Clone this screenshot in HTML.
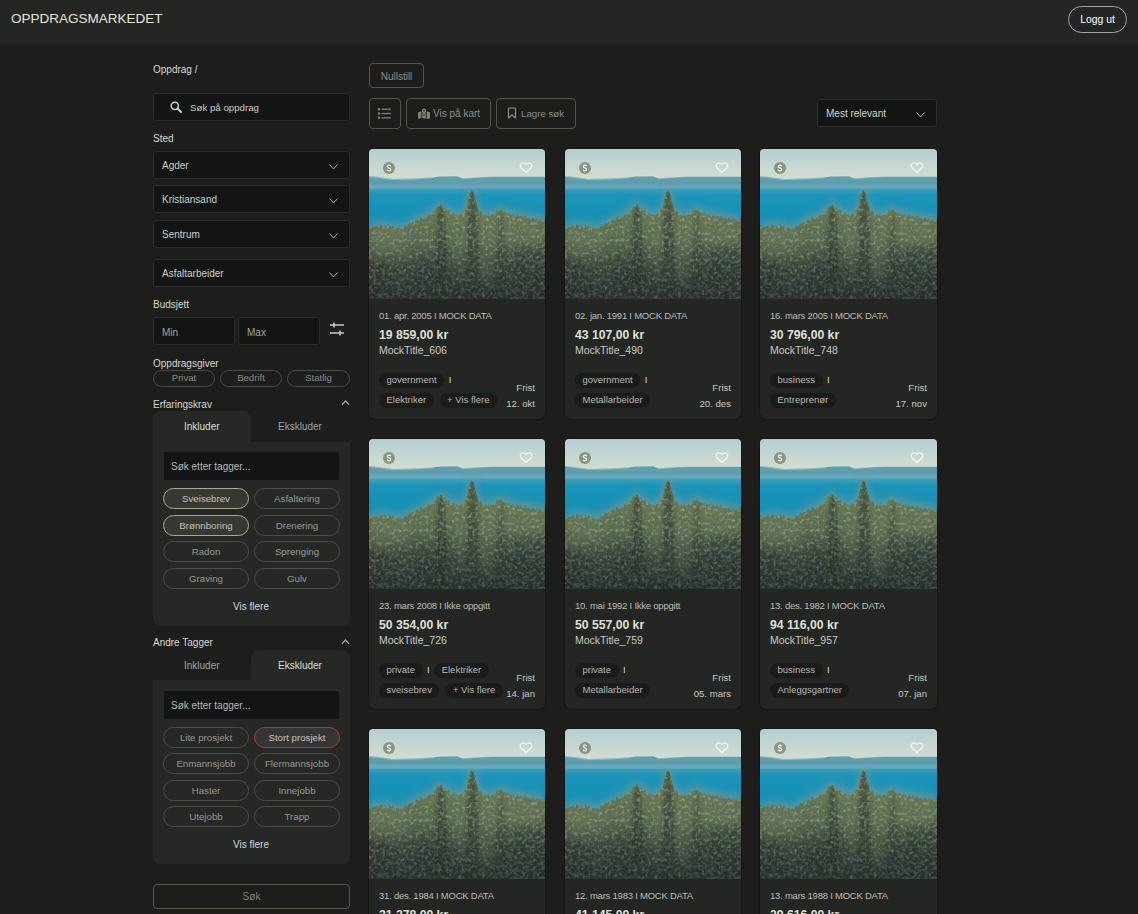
<!DOCTYPE html>
<html><head><meta charset="utf-8">
<style>
*{box-sizing:border-box;margin:0;padding:0}
html,body{width:1138px;height:914px;overflow:hidden;background:#1d1d1b;font-family:"Liberation Sans",sans-serif;color:#d4d8cc}
.a{position:absolute}
.hdr{left:0;top:0;width:1138px;height:44px;background:#242623}
.logo{left:11px;top:11px;font-size:13.5px;color:#e4e6d6;white-space:nowrap}
.logout{left:1068px;top:6px;width:59px;height:27px;border:1px solid #a3a49c;border-radius:14px;color:#fff;font-size:10.4px;text-align:center;line-height:25px}
.lbl{font-size:10px;color:#d6dace;white-space:nowrap;line-height:12px}
.inp{background:#131514;border:1px solid #2b2c2a;border-radius:3px}
.sel{left:153px;width:197px;height:28px}
.sel span{position:absolute;left:8px;top:8px;font-size:10px;color:#c9cdc5;line-height:12px}
.chev{position:absolute;right:11px;top:12px;width:9px;height:6px}
.pill{border:1px solid #4a4b46;border-radius:9px;color:#878984;font-size:9.6px;text-align:center;line-height:14px;height:17px}
.panel{left:153px;width:197px}
.pbody{position:absolute;left:0;top:31px;width:197px;bottom:0;background:#262826;border-radius:0 0 8px 8px}
.tact{position:absolute;top:0;height:31px;background:#262826;border-radius:8px 8px 0 0}
.tabout{position:absolute;top:0;height:31px;width:99px;background:#1e1e1d}
.tabtxt{position:absolute;top:10px;font-size:10px;line-height:12px;white-space:nowrap}
.tin{position:absolute;left:11px;top:41px;width:175px;height:28px;background:#131514;border-radius:2px}
.tin span{position:absolute;left:7px;top:9px;font-size:10px;color:#b4b8b0;line-height:12px}
.tag{position:absolute;width:86px;height:21px;border:1px solid #4c4d46;border-radius:11px;color:#979994;font-size:9.7px;text-align:center;line-height:19px;white-space:nowrap}
.tag.on{border-color:#a9aa8a;background:#363831;color:#c2c4bc}
.tag.red{border-color:#b0392d;background:#353535;color:#c4c6c0}
.visf{position:absolute;font-size:10px;color:#cdd6d8;line-height:12px;white-space:nowrap}
.btn{border:1px solid #54564b;border-radius:4px;color:#8a8e8a;font-size:10px;white-space:nowrap}
.card{width:176px;height:270px;background:#242624;box-shadow:0 0 1px 0.5px #191918;border-radius:4px 4px 7px 7px;overflow:hidden}
.card svg.pic{position:absolute;left:0;top:0;width:100%;height:150px}
.date{position:absolute;left:10px;top:161px;font-size:9.5px;color:#b9bdb5;line-height:12px;white-space:nowrap;letter-spacing:-0.23px}
.price{position:absolute;left:10px;top:179px;font-size:12.2px;font-weight:bold;color:#dfe1d7;line-height:15px;white-space:nowrap}
.title{position:absolute;left:10px;top:195px;font-size:10.5px;color:#c6cac0;line-height:12px;white-space:nowrap}
.trow{position:absolute;left:10px;display:flex;gap:6px;white-space:nowrap}
.ct{display:block;height:15px;border-radius:8px;background:#1a1b1a;color:#b4b8b0;font-size:9.5px;line-height:14px;padding:0 7.5px;white-space:nowrap}
.dv{display:block;font-size:9.5px;line-height:13px;height:15px;color:#d8d8d0;margin:0 -1.5px}
.bar{position:absolute;width:1px;height:7px;background:#d8d8d0}
.frist{position:absolute;right:10px;font-size:9.6px;color:#c4c8c0;line-height:12px;white-space:nowrap;text-align:right}
</style></head><body>
<svg width="0" height="0" style="position:absolute">
<defs>
<linearGradient id="sky" gradientUnits="userSpaceOnUse" x1="0" y1="0" x2="0" y2="30"><stop offset="0" stop-color="#b3cfd0"/><stop offset="0.65" stop-color="#c8d8d2"/><stop offset="1" stop-color="#d4ddcf"/></linearGradient>
<linearGradient id="mtn" x1="0" y1="0" x2="0" y2="1"><stop offset="0" stop-color="#64a0ae"/><stop offset="0.5" stop-color="#5b9dae"/><stop offset="0.8" stop-color="#6aaabc"/><stop offset="1" stop-color="#3d9dbd"/></linearGradient>
<linearGradient id="sea" x1="0" y1="0" x2="0" y2="1"><stop offset="0" stop-color="#3aa0bd"/><stop offset="0.06" stop-color="#1a94b8"/><stop offset="0.4" stop-color="#108eb4"/><stop offset="1" stop-color="#0d8ab0"/></linearGradient>
<linearGradient id="tr" x1="0" y1="0" x2="0" y2="1"><stop offset="0.4" stop-color="#6b7d50"/><stop offset="0.62" stop-color="#58694a"/><stop offset="0.8" stop-color="#3e4a3d"/><stop offset="1" stop-color="#313937"/></linearGradient>
<linearGradient id="shade" gradientUnits="userSpaceOnUse" x1="0" y1="90" x2="0" y2="150"><stop offset="0" stop-color="#1c2420" stop-opacity="0"/><stop offset="1" stop-color="#1c2420" stop-opacity="0.45"/></linearGradient>
<filter id="blr" x="-10%" y="-10%" width="120%" height="120%"><feGaussianBlur stdDeviation="1.5"/></filter>
<filter id="blr2" x="-20%" y="-20%" width="140%" height="140%"><feGaussianBlur stdDeviation="4"/></filter>
<filter id="nz" x="0" y="0" width="100%" height="100%"><feTurbulence type="fractalNoise" baseFrequency="0.3" numOctaves="2" seed="5"/><feColorMatrix type="matrix" values="0 0 0 0 0.62  0 0 0 0 0.7  0 0 0 0 0.46  3 0 0 0 -1.5"/></filter>
<filter id="nzd" x="0" y="0" width="100%" height="100%"><feTurbulence type="fractalNoise" baseFrequency="0.25" numOctaves="2" seed="11"/><feColorMatrix type="matrix" values="0 0 0 0 0.12  0 0 0 0 0.15  0 0 0 0 0.15  3 0 0 0 -1.3"/></filter>
<clipPath id="tclip"><path d="M0.0 76.4 L2.0 78.8 L4.0 77.5 L6.0 78.3 L8.0 76.0 L10.0 78.3 L12.0 74.8 L14.0 77.8 L16.0 76.1 L18.0 79.1 L20.0 75.3 L22.0 78.7 L24.0 76.1 L26.0 80.7 L28.0 78.7 L30.0 79.6 L32.0 79.1 L34.0 80.3 L36.0 76.6 L38.0 77.8 L40.0 73.5 L42.0 74.7 L44.0 73.0 L46.0 73.1 L48.0 70.1 L50.0 71.6 L52.0 67.6 L54.0 70.2 L56.0 66.7 L58.0 68.7 L60.0 64.4 L62.0 65.7 L64.0 61.5 L66.0 62.2 L68.0 57.4 L70.0 57.2 L72.0 55.0 L74.0 59.0 L76.0 58.5 L78.0 62.3 L80.0 60.9 L82.0 65.1 L84.0 63.4 L86.0 65.7 L88.0 65.8 L90.0 67.5 L92.0 64.5 L94.0 63.5 L96.0 60.9 L98.0 57.6 L100.0 48.0 L102.0 41.7 L104.0 40.7 L106.0 49.7 L108.0 55.9 L110.0 63.5 L112.0 61.2 L114.0 66.1 L116.0 65.3 L118.0 67.2 L120.0 63.8 L122.0 66.3 L124.0 65.4 L126.0 66.4 L128.0 60.8 L130.0 61.9 L132.0 58.9 L134.0 62.4 L136.0 63.4 L138.0 64.5 L140.0 63.9 L142.0 66.4 L144.0 64.0 L146.0 68.3 L148.0 64.7 L150.0 68.7 L152.0 65.2 L154.0 68.7 L156.0 66.1 L158.0 68.9 L160.0 68.9 L162.0 70.8 L164.0 67.4 L166.0 71.5 L168.0 67.6 L170.0 70.7 L172.0 70.1 L174.0 71.9 L176.0 68.3 L176 150 L0 150Z"/></clipPath>
<symbol id="pic" viewBox="0 0 176 150">
<rect width="176" height="150" fill="url(#sky)"/>
<path d="M0 27 L10 28 L23 30 L45 29.5 L62 28.6 L70 27.4 L88 27.2 L94 29.2 L108 28.3 L124 27.5 L176 27.5 L176 41 L0 41Z" fill="url(#mtn)"/>
<path d="M0 27.5 L10 28.5 L23 30.6 L45 30 L62 29 L70 26.8 L88 26.7 L94 29.8 L108 28.3 L124 27.5 L176 27.5" fill="none" stroke="#d8e6e2" stroke-width="0.8" opacity="0.5"/>
<rect y="40" width="176" height="110" fill="url(#sea)"/>
<g transform="translate(0,-4)"><path filter="url(#blr2)" d="M0.0 76.4 L2.0 78.8 L4.0 77.5 L6.0 78.3 L8.0 76.0 L10.0 78.3 L12.0 74.8 L14.0 77.8 L16.0 76.1 L18.0 79.1 L20.0 75.3 L22.0 78.7 L24.0 76.1 L26.0 80.7 L28.0 78.7 L30.0 79.6 L32.0 79.1 L34.0 80.3 L36.0 76.6 L38.0 77.8 L40.0 73.5 L42.0 74.7 L44.0 73.0 L46.0 73.1 L48.0 70.1 L50.0 71.6 L52.0 67.6 L54.0 70.2 L56.0 66.7 L58.0 68.7 L60.0 64.4 L62.0 65.7 L64.0 61.5 L66.0 62.2 L68.0 57.4 L70.0 57.2 L72.0 55.0 L74.0 59.0 L76.0 58.5 L78.0 62.3 L80.0 60.9 L82.0 65.1 L84.0 63.4 L86.0 65.7 L88.0 65.8 L90.0 67.5 L92.0 64.5 L94.0 63.5 L96.0 60.9 L98.0 57.6 L100.0 48.0 L102.0 41.7 L104.0 40.7 L106.0 49.7 L108.0 55.9 L110.0 63.5 L112.0 61.2 L114.0 66.1 L116.0 65.3 L118.0 67.2 L120.0 63.8 L122.0 66.3 L124.0 65.4 L126.0 66.4 L128.0 60.8 L130.0 61.9 L132.0 58.9 L134.0 62.4 L136.0 63.4 L138.0 64.5 L140.0 63.9 L142.0 66.4 L144.0 64.0 L146.0 68.3 L148.0 64.7 L150.0 68.7 L152.0 65.2 L154.0 68.7 L156.0 66.1 L158.0 68.9 L160.0 68.9 L162.0 70.8 L164.0 67.4 L166.0 71.5 L168.0 67.6 L170.0 70.7 L172.0 70.1 L174.0 71.9 L176.0 68.3 L176 150 L0 150Z" fill="#869a92" opacity="0.7"/></g>
<g clip-path="url(#tclip)">
<rect width="176" height="150" fill="url(#tr)"/>
<g filter="url(#blr2)">
<path d="M-5 112 L18 108 L22 155 L-5 155Z" fill="#2a322e" opacity="0.5"/>
<path d="M142 100 L180 95 L180 155 L138 155Z" fill="#28302d" opacity="0.45"/>
<path d="M48 115 L60 105 L66 155 L44 155Z" fill="#2d3331" opacity="0.5"/>
<path d="M86 86 L112 80 L128 92 L124 134 L96 138 L86 110Z" fill="#728458" opacity="0.35"/>
<path d="M2 78 L37 74 L38 108 L4 110Z" fill="#718259" opacity="0.4"/>
<path d="M118 70 L170 74 L172 95 L125 94Z" fill="#6c7b56" opacity="0.35"/>
</g>
<g filter="url(#blr)">
<path d="M72 50 L76 70 L81 150 L63 150 L68 70Z" fill="#26302a" opacity="0.6"/>
<path d="M103.5 32 L108 60 L113 150 L94 150 L99 60Z" fill="#26302a" opacity="0.55"/><path d="M132 60 L136 80 L139 150 L125 150 L128 80Z" fill="#26302a" opacity="0.35"/>
</g>
<rect width="176" height="150" filter="url(#nzd)" opacity="0.75"/>
<rect width="176" height="150" filter="url(#nz)" opacity="0.42"/>
<rect width="176" height="150" fill="url(#shade)"/>
</g>
</symbol>
</defs>
</svg>

<div class="a hdr"></div>
<div class="a logo">OPPDRAGSMARKEDET</div>
<div class="a logout">Logg ut</div>

<!-- SIDEBAR -->
<div class="a lbl" style="left:153px;top:64px">Oppdrag /</div>
<div class="a inp" style="left:153px;top:93px;width:197px;height:28px">
  <svg class="a" style="left:16px;top:7px" width="12" height="12" viewBox="0 0 12 12"><circle cx="4.8" cy="4.8" r="3.6" fill="none" stroke="#d0d4cc" stroke-width="1.5"/><path d="M7.5 7.5 L11 11" stroke="#d0d4cc" stroke-width="1.8" stroke-linecap="round"/></svg>
  <span class="a" style="left:36px;top:8px;font-size:9.7px;color:#c9cdc5;line-height:12px">Søk på oppdrag</span>
</div>
<div class="a lbl" style="left:153px;top:133px">Sted</div>
<div class="a inp sel" style="top:151px"><span>Agder</span><svg class="chev" viewBox="0 0 9 6"><path d="M0.5 0.5 L4.5 5 L8.5 0.5" fill="none" stroke="#a8aaa4" stroke-width="1"/></svg></div>
<div class="a inp sel" style="top:185px"><span>Kristiansand</span><svg class="chev" viewBox="0 0 9 6"><path d="M0.5 0.5 L4.5 5 L8.5 0.5" fill="none" stroke="#a8aaa4" stroke-width="1"/></svg></div>
<div class="a inp sel" style="top:220px"><span>Sentrum</span><svg class="chev" viewBox="0 0 9 6"><path d="M0.5 0.5 L4.5 5 L8.5 0.5" fill="none" stroke="#a8aaa4" stroke-width="1"/></svg></div>
<div class="a inp sel" style="top:259px"><span>Asfaltarbeider</span><svg class="chev" viewBox="0 0 9 6"><path d="M0.5 0.5 L4.5 5 L8.5 0.5" fill="none" stroke="#a8aaa4" stroke-width="1"/></svg></div>
<div class="a lbl" style="left:153px;top:299px">Budsjett</div>
<div class="a inp" style="left:153px;top:317px;width:82px;height:28px"><span class="a" style="left:8px;top:9px;font-size:10px;color:#a0a49e;line-height:12px">Min</span></div>
<div class="a inp" style="left:238px;top:317px;width:82px;height:28px"><span class="a" style="left:8px;top:9px;font-size:10px;color:#a0a49e;line-height:12px">Max</span></div>
<svg class="a" style="left:330px;top:322px" width="15" height="14" viewBox="0 0 15 14"><path d="M0 3 H14 M0 11 H14" stroke="#c8ccc4" stroke-width="1.6"/><path d="M4 0.5 V5.5 M10 8.5 V13.5" stroke="#c8ccc4" stroke-width="1.6"/></svg>
<div class="a lbl" style="left:153px;top:358px">Oppdragsgiver</div>
<div class="a pill" style="left:153px;top:370px;width:62px">Privat</div>
<div class="a pill" style="left:220px;top:370px;width:62px">Bedrift</div>
<div class="a pill" style="left:287px;top:370px;width:63px">Statlig</div>

<div class="a lbl" style="left:153px;top:399px">Erfaringskrav</div>
<svg class="a" style="left:341px;top:399px" width="9" height="7" viewBox="0 0 9 7"><path d="M1 5.8 L4.5 2 L8 5.8" fill="none" stroke="#a8aaa4" stroke-width="1.2"/></svg>
<div class="a panel" style="top:411px;height:215px">
  <div class="pbody"></div><div class="tact" style="left:0;width:98px"></div>
  <div class="tabtxt" style="left:31px;color:#dadfd2">Inkluder</div>
  <div class="tabtxt" style="left:125px;color:#9aa3a4">Ekskluder</div>
  <div class="tin"><span>Søk etter tagger...</span></div>
  <div class="tag on" style="left:10px;top:77px">Sveisebrev</div>
  <div class="tag" style="left:101px;top:77px">Asfaltering</div>
  <div class="tag on" style="left:10px;top:104px">Brønnboring</div>
  <div class="tag" style="left:101px;top:104px">Drenering</div>
  <div class="tag" style="left:10px;top:130px">Radon</div>
  <div class="tag" style="left:101px;top:130px">Sprenging</div>
  <div class="tag" style="left:10px;top:157px">Graving</div>
  <div class="tag" style="left:101px;top:157px">Gulv</div>
  <div class="visf" style="left:80px;top:190px">Vis flere</div>
</div>

<div class="a lbl" style="left:153px;top:637px">Andre Tagger</div>
<svg class="a" style="left:341px;top:638px" width="9" height="7" viewBox="0 0 9 7"><path d="M1 5.8 L4.5 2 L8 5.8" fill="none" stroke="#a8aaa4" stroke-width="1.2"/></svg>
<div class="a panel" style="top:650px;height:214px">
  <div class="pbody" style="top:30px"></div><div class="tact" style="left:98px;width:99px;height:30px"></div>
  <div class="tabtxt" style="left:31px;top:10px;color:#9aa3a4">Inkluder</div>
  <div class="tabtxt" style="left:125px;top:10px;color:#dadfd2">Ekskluder</div>
  <div class="tin"><span>Søk etter tagger...</span></div>
  <div class="tag" style="left:10px;top:77px">Lite prosjekt</div>
  <div class="tag red" style="left:101px;top:77px">Stort prosjekt</div>
  <div class="tag" style="left:10px;top:103px">Enmannsjobb</div>
  <div class="tag" style="left:101px;top:103px">Flermannsjobb</div>
  <div class="tag" style="left:10px;top:130px">Haster</div>
  <div class="tag" style="left:101px;top:130px">Innejobb</div>
  <div class="tag" style="left:10px;top:156px">Utejobb</div>
  <div class="tag" style="left:101px;top:156px">Trapp</div>
  <div class="visf" style="left:80px;top:189px">Vis flere</div>
</div>
<div class="a btn" style="left:153px;top:884px;width:197px;height:25px;text-align:center;line-height:23px;color:#7c807c">Søk</div>

<!-- MAIN TOOLBAR -->
<div class="a btn" style="left:369px;top:63px;width:55px;height:25px;text-align:center;line-height:25px">Nullstill</div>
<div class="a btn" style="left:369px;top:98px;width:32px;height:31px"></div>
<svg class="a" style="left:377px;top:107px" width="15" height="13" viewBox="0 0 15 13"><g fill="#80846f"><circle cx="2" cy="2.2" r="1.2"/><circle cx="2" cy="6.5" r="1.2"/><circle cx="2" cy="10.8" r="1.2"/><rect x="4.6" y="1.6" width="9.2" height="1.3"/><rect x="4.6" y="5.9" width="9.2" height="1.3"/><rect x="4.6" y="10.2" width="9.2" height="1.3"/></g></svg>
<div class="a btn" style="left:406px;top:98px;width:85px;height:31px"></div>
<svg class="a" style="left:418px;top:108px" width="12" height="11" viewBox="0 0 12 11"><path d="M0 4.3 L3.3 3.4 L3.3 10 L0 11Z M4.2 3.6 L5.6 7.6 L6 8.2 L6.4 7.6 L7.8 3.6 L7.8 10.8 L4.2 10Z M8.7 3.4 L12 4.3 L12 10.2 L8.7 11Z" fill="#80846f"/><path d="M6 7.6 L4.1 3.6 A2.1 2.1 0 1 1 7.9 3.6Z" fill="#80846f"/><circle cx="6" cy="2.6" r="0.8" fill="#1d1d1b"/></svg>
<div class="a" style="left:433px;top:108px;font-size:10px;line-height:12px;color:#8a8e8a;white-space:nowrap">Vis på kart</div>
<div class="a btn" style="left:496px;top:98px;width:80px;height:31px"></div>
<svg class="a" style="left:507px;top:107px" width="10" height="12" viewBox="0 0 10 12"><path d="M1.5 1 H8.5 V11 L5 8 L1.5 11Z" fill="none" stroke="#8a8e8a" stroke-width="1.2" stroke-linejoin="round"/></svg>
<div class="a" style="left:521px;top:108px;font-size:9.7px;line-height:12px;color:#8a8e8a;white-space:nowrap">Lagre søk</div>
<div class="a inp" style="left:817px;top:99px;width:120px;height:28px"><span class="a" style="left:8px;top:8px;font-size:10px;color:#d0d4cc;line-height:12px">Mest relevant</span><svg class="chev" viewBox="0 0 9 6"><path d="M0.5 0.5 L4.5 5 L8.5 0.5" fill="none" stroke="#a8aaa4" stroke-width="1"/></svg></div>

<div class="a card" style="left:369px;top:149px">
<svg class="pic" viewBox="0 0 176 150" preserveAspectRatio="none"><use href="#pic"/></svg>
<svg class="a" style="left:14px;top:13px" width="12" height="12" viewBox="0 0 12 12"><circle cx="6" cy="6" r="6" fill="#8a957f"/><path d="M7.7 4.2 C7.4 3.5 6.8 3.1 6 3.1 C5.1 3.1 4.4 3.6 4.4 4.4 C4.4 6.1 7.7 5.6 7.7 7.5 C7.7 8.4 7 8.9 6 8.9 C5.1 8.9 4.5 8.4 4.2 7.7" fill="none" stroke="#f4f6f0" stroke-width="1.25"/></svg>
<svg class="a" style="left:150px;top:13px" width="14" height="12" viewBox="0 0 14 12"><path d="M7 10.6 L2.2 5.9 C0.9 4.6 0.9 2.5 2.3 1.5 C3.8 0.5 5.7 1 7 2.6 C8.3 1 10.2 0.5 11.7 1.5 C13.1 2.5 13.1 4.6 11.8 5.9 Z" fill="none" stroke="#f2f4f0" stroke-width="1.4" stroke-linejoin="round"/></svg>
<div class="date">01. apr. 2005 I MOCK DATA</div>
<div class="price">19 859,00 kr</div>
<div class="title">MockTitle_606</div>
<div class="trow" style="top:224px">
<span class="ct">government</span>
<span class="dv">I</span>
</div>
<div class="trow" style="top:244px">
<span class="ct">Elektriker</span>
<span class="ct">+ Vis flere</span>
</div>
<div class="frist" style="top:233px">Frist</div>
<div class="frist" style="top:249px">12. okt</div>
</div>
<div class="a card" style="left:565px;top:149px">
<svg class="pic" viewBox="0 0 176 150" preserveAspectRatio="none"><use href="#pic"/></svg>
<svg class="a" style="left:14px;top:13px" width="12" height="12" viewBox="0 0 12 12"><circle cx="6" cy="6" r="6" fill="#8a957f"/><path d="M7.7 4.2 C7.4 3.5 6.8 3.1 6 3.1 C5.1 3.1 4.4 3.6 4.4 4.4 C4.4 6.1 7.7 5.6 7.7 7.5 C7.7 8.4 7 8.9 6 8.9 C5.1 8.9 4.5 8.4 4.2 7.7" fill="none" stroke="#f4f6f0" stroke-width="1.25"/></svg>
<svg class="a" style="left:150px;top:13px" width="14" height="12" viewBox="0 0 14 12"><path d="M7 10.6 L2.2 5.9 C0.9 4.6 0.9 2.5 2.3 1.5 C3.8 0.5 5.7 1 7 2.6 C8.3 1 10.2 0.5 11.7 1.5 C13.1 2.5 13.1 4.6 11.8 5.9 Z" fill="none" stroke="#f2f4f0" stroke-width="1.4" stroke-linejoin="round"/></svg>
<div class="date">02. jan. 1991 I MOCK DATA</div>
<div class="price">43 107,00 kr</div>
<div class="title">MockTitle_490</div>
<div class="trow" style="top:224px">
<span class="ct">government</span>
<span class="dv">I</span>
</div>
<div class="trow" style="top:244px">
<span class="ct">Metallarbeider</span>
</div>
<div class="frist" style="top:233px">Frist</div>
<div class="frist" style="top:249px">20. des</div>
</div>
<div class="a card" style="left:760px;top:149px;width:177px">
<svg class="pic" viewBox="0 0 176 150" preserveAspectRatio="none"><use href="#pic"/></svg>
<svg class="a" style="left:14px;top:13px" width="12" height="12" viewBox="0 0 12 12"><circle cx="6" cy="6" r="6" fill="#8a957f"/><path d="M7.7 4.2 C7.4 3.5 6.8 3.1 6 3.1 C5.1 3.1 4.4 3.6 4.4 4.4 C4.4 6.1 7.7 5.6 7.7 7.5 C7.7 8.4 7 8.9 6 8.9 C5.1 8.9 4.5 8.4 4.2 7.7" fill="none" stroke="#f4f6f0" stroke-width="1.25"/></svg>
<svg class="a" style="left:150px;top:13px" width="14" height="12" viewBox="0 0 14 12"><path d="M7 10.6 L2.2 5.9 C0.9 4.6 0.9 2.5 2.3 1.5 C3.8 0.5 5.7 1 7 2.6 C8.3 1 10.2 0.5 11.7 1.5 C13.1 2.5 13.1 4.6 11.8 5.9 Z" fill="none" stroke="#f2f4f0" stroke-width="1.4" stroke-linejoin="round"/></svg>
<div class="date">16. mars 2005 I MOCK DATA</div>
<div class="price">30 796,00 kr</div>
<div class="title">MockTitle_748</div>
<div class="trow" style="top:224px">
<span class="ct">business</span>
<span class="dv">I</span>
</div>
<div class="trow" style="top:244px">
<span class="ct">Entreprenør</span>
</div>
<div class="frist" style="top:233px">Frist</div>
<div class="frist" style="top:249px">17. nov</div>
</div>
<div class="a card" style="left:369px;top:439px">
<svg class="pic" viewBox="0 0 176 150" preserveAspectRatio="none"><use href="#pic"/></svg>
<svg class="a" style="left:14px;top:13px" width="12" height="12" viewBox="0 0 12 12"><circle cx="6" cy="6" r="6" fill="#8a957f"/><path d="M7.7 4.2 C7.4 3.5 6.8 3.1 6 3.1 C5.1 3.1 4.4 3.6 4.4 4.4 C4.4 6.1 7.7 5.6 7.7 7.5 C7.7 8.4 7 8.9 6 8.9 C5.1 8.9 4.5 8.4 4.2 7.7" fill="none" stroke="#f4f6f0" stroke-width="1.25"/></svg>
<svg class="a" style="left:150px;top:13px" width="14" height="12" viewBox="0 0 14 12"><path d="M7 10.6 L2.2 5.9 C0.9 4.6 0.9 2.5 2.3 1.5 C3.8 0.5 5.7 1 7 2.6 C8.3 1 10.2 0.5 11.7 1.5 C13.1 2.5 13.1 4.6 11.8 5.9 Z" fill="none" stroke="#f2f4f0" stroke-width="1.4" stroke-linejoin="round"/></svg>
<div class="date">23. mars 2008 I Ikke oppgitt</div>
<div class="price">50 354,00 kr</div>
<div class="title">MockTitle_726</div>
<div class="trow" style="top:224px">
<span class="ct">private</span>
<span class="dv">I</span>
<span class="ct">Elektriker</span>
</div>
<div class="trow" style="top:244px">
<span class="ct">sveisebrev</span>
<span class="ct">+ Vis flere</span>
</div>
<div class="frist" style="top:233px">Frist</div>
<div class="frist" style="top:249px">14. jan</div>
</div>
<div class="a card" style="left:565px;top:439px">
<svg class="pic" viewBox="0 0 176 150" preserveAspectRatio="none"><use href="#pic"/></svg>
<svg class="a" style="left:14px;top:13px" width="12" height="12" viewBox="0 0 12 12"><circle cx="6" cy="6" r="6" fill="#8a957f"/><path d="M7.7 4.2 C7.4 3.5 6.8 3.1 6 3.1 C5.1 3.1 4.4 3.6 4.4 4.4 C4.4 6.1 7.7 5.6 7.7 7.5 C7.7 8.4 7 8.9 6 8.9 C5.1 8.9 4.5 8.4 4.2 7.7" fill="none" stroke="#f4f6f0" stroke-width="1.25"/></svg>
<svg class="a" style="left:150px;top:13px" width="14" height="12" viewBox="0 0 14 12"><path d="M7 10.6 L2.2 5.9 C0.9 4.6 0.9 2.5 2.3 1.5 C3.8 0.5 5.7 1 7 2.6 C8.3 1 10.2 0.5 11.7 1.5 C13.1 2.5 13.1 4.6 11.8 5.9 Z" fill="none" stroke="#f2f4f0" stroke-width="1.4" stroke-linejoin="round"/></svg>
<div class="date">10. mai 1992 I Ikke oppgitt</div>
<div class="price">50 557,00 kr</div>
<div class="title">MockTitle_759</div>
<div class="trow" style="top:224px">
<span class="ct">private</span>
<span class="dv">I</span>
</div>
<div class="trow" style="top:244px">
<span class="ct">Metallarbeider</span>
</div>
<div class="frist" style="top:233px">Frist</div>
<div class="frist" style="top:249px">05. mars</div>
</div>
<div class="a card" style="left:760px;top:439px;width:177px">
<svg class="pic" viewBox="0 0 176 150" preserveAspectRatio="none"><use href="#pic"/></svg>
<svg class="a" style="left:14px;top:13px" width="12" height="12" viewBox="0 0 12 12"><circle cx="6" cy="6" r="6" fill="#8a957f"/><path d="M7.7 4.2 C7.4 3.5 6.8 3.1 6 3.1 C5.1 3.1 4.4 3.6 4.4 4.4 C4.4 6.1 7.7 5.6 7.7 7.5 C7.7 8.4 7 8.9 6 8.9 C5.1 8.9 4.5 8.4 4.2 7.7" fill="none" stroke="#f4f6f0" stroke-width="1.25"/></svg>
<svg class="a" style="left:150px;top:13px" width="14" height="12" viewBox="0 0 14 12"><path d="M7 10.6 L2.2 5.9 C0.9 4.6 0.9 2.5 2.3 1.5 C3.8 0.5 5.7 1 7 2.6 C8.3 1 10.2 0.5 11.7 1.5 C13.1 2.5 13.1 4.6 11.8 5.9 Z" fill="none" stroke="#f2f4f0" stroke-width="1.4" stroke-linejoin="round"/></svg>
<div class="date">13. des. 1982 I MOCK DATA</div>
<div class="price">94 116,00 kr</div>
<div class="title">MockTitle_957</div>
<div class="trow" style="top:224px">
<span class="ct">business</span>
<span class="dv">I</span>
</div>
<div class="trow" style="top:244px">
<span class="ct">Anleggsgartner</span>
</div>
<div class="frist" style="top:233px">Frist</div>
<div class="frist" style="top:249px">07. jan</div>
</div>
<div class="a card" style="left:369px;top:729px">
<svg class="pic" viewBox="0 0 176 150" preserveAspectRatio="none"><use href="#pic"/></svg>
<svg class="a" style="left:14px;top:13px" width="12" height="12" viewBox="0 0 12 12"><circle cx="6" cy="6" r="6" fill="#8a957f"/><path d="M7.7 4.2 C7.4 3.5 6.8 3.1 6 3.1 C5.1 3.1 4.4 3.6 4.4 4.4 C4.4 6.1 7.7 5.6 7.7 7.5 C7.7 8.4 7 8.9 6 8.9 C5.1 8.9 4.5 8.4 4.2 7.7" fill="none" stroke="#f4f6f0" stroke-width="1.25"/></svg>
<svg class="a" style="left:150px;top:13px" width="14" height="12" viewBox="0 0 14 12"><path d="M7 10.6 L2.2 5.9 C0.9 4.6 0.9 2.5 2.3 1.5 C3.8 0.5 5.7 1 7 2.6 C8.3 1 10.2 0.5 11.7 1.5 C13.1 2.5 13.1 4.6 11.8 5.9 Z" fill="none" stroke="#f2f4f0" stroke-width="1.4" stroke-linejoin="round"/></svg>
<div class="date">31. des. 1984 I MOCK DATA</div>
<div class="price">21 278,00 kr</div>
<div class="title">MockTitle_311</div>
<div class="trow" style="top:224px">
<span class="ct">private</span>
<span class="dv">I</span>
</div>
<div class="trow" style="top:244px">
<span class="ct">Elektriker</span>
</div>
<div class="frist" style="top:233px">Frist</div>
<div class="frist" style="top:249px">11. feb</div>
</div>
<div class="a card" style="left:565px;top:729px">
<svg class="pic" viewBox="0 0 176 150" preserveAspectRatio="none"><use href="#pic"/></svg>
<svg class="a" style="left:14px;top:13px" width="12" height="12" viewBox="0 0 12 12"><circle cx="6" cy="6" r="6" fill="#8a957f"/><path d="M7.7 4.2 C7.4 3.5 6.8 3.1 6 3.1 C5.1 3.1 4.4 3.6 4.4 4.4 C4.4 6.1 7.7 5.6 7.7 7.5 C7.7 8.4 7 8.9 6 8.9 C5.1 8.9 4.5 8.4 4.2 7.7" fill="none" stroke="#f4f6f0" stroke-width="1.25"/></svg>
<svg class="a" style="left:150px;top:13px" width="14" height="12" viewBox="0 0 14 12"><path d="M7 10.6 L2.2 5.9 C0.9 4.6 0.9 2.5 2.3 1.5 C3.8 0.5 5.7 1 7 2.6 C8.3 1 10.2 0.5 11.7 1.5 C13.1 2.5 13.1 4.6 11.8 5.9 Z" fill="none" stroke="#f2f4f0" stroke-width="1.4" stroke-linejoin="round"/></svg>
<div class="date">12. mars 1983 I MOCK DATA</div>
<div class="price">41 145,00 kr</div>
<div class="title">MockTitle_412</div>
<div class="trow" style="top:224px">
<span class="ct">business</span>
<span class="dv">I</span>
</div>
<div class="trow" style="top:244px">
<span class="ct">Metallarbeider</span>
</div>
<div class="frist" style="top:233px">Frist</div>
<div class="frist" style="top:249px">02. apr</div>
</div>
<div class="a card" style="left:760px;top:729px;width:177px">
<svg class="pic" viewBox="0 0 176 150" preserveAspectRatio="none"><use href="#pic"/></svg>
<svg class="a" style="left:14px;top:13px" width="12" height="12" viewBox="0 0 12 12"><circle cx="6" cy="6" r="6" fill="#8a957f"/><path d="M7.7 4.2 C7.4 3.5 6.8 3.1 6 3.1 C5.1 3.1 4.4 3.6 4.4 4.4 C4.4 6.1 7.7 5.6 7.7 7.5 C7.7 8.4 7 8.9 6 8.9 C5.1 8.9 4.5 8.4 4.2 7.7" fill="none" stroke="#f4f6f0" stroke-width="1.25"/></svg>
<svg class="a" style="left:150px;top:13px" width="14" height="12" viewBox="0 0 14 12"><path d="M7 10.6 L2.2 5.9 C0.9 4.6 0.9 2.5 2.3 1.5 C3.8 0.5 5.7 1 7 2.6 C8.3 1 10.2 0.5 11.7 1.5 C13.1 2.5 13.1 4.6 11.8 5.9 Z" fill="none" stroke="#f2f4f0" stroke-width="1.4" stroke-linejoin="round"/></svg>
<div class="date">13. mars 1988 I MOCK DATA</div>
<div class="price">39 616,00 kr</div>
<div class="title">MockTitle_513</div>
<div class="trow" style="top:224px">
<span class="ct">government</span>
<span class="dv">I</span>
</div>
<div class="trow" style="top:244px">
<span class="ct">Entreprenør</span>
</div>
<div class="frist" style="top:233px">Frist</div>
<div class="frist" style="top:249px">19. okt</div>
</div>
</body></html>
